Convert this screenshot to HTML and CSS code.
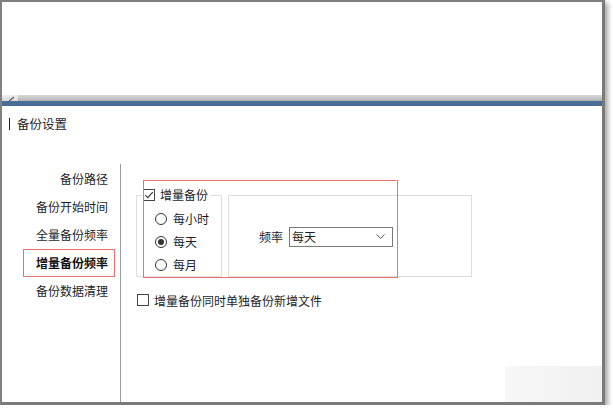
FILE: index.html
```html
<!DOCTYPE html>
<html lang="zh-CN">
<head>
<meta charset="utf-8">
<title>备份设置</title>
<link rel="stylesheet" href="styles.css">
</head>
<body>
<div class="window">
  <div class="top-pane"></div>
  <div class="hscroll">
    <div class="hscroll-start">
      <svg class="grip" width="6" height="5" viewBox="0 0 6 5"><path d="M0 5 L5 1" stroke="#555" stroke-width="1.2" fill="none"/></svg>
    </div>
    <div class="hscroll-track"></div>
  </div>
  <div class="splitter"></div>
  <div class="title"><span class="title-bar"></span><span>备份设置</span></div>
  <div class="body">
    <nav class="nav">
      <div class="nav-item">备份路径</div>
      <div class="nav-item">备份开始时间</div>
      <div class="nav-item">全量备份频率</div>
      <div class="nav-item active">增量备份频率</div>
      <div class="nav-item">备份数据清理</div>
    </nav>
    <main class="content">
      <div class="groups">
        <fieldset class="group group-mode">
          <legend class="legend">
            <svg class="box" width="12" height="12" viewBox="0 0 12 12"><rect x="0.5" y="0.5" width="11" height="11" fill="#fff" stroke="#444"/><path d="M2.3 6.2 L4.8 8.7 L9.8 3.2" stroke="#333" stroke-width="1.1" fill="none"/></svg>
            <span>增量备份</span>
          </legend>
          <div class="radio-row">
            <svg class="radio" width="12" height="12" viewBox="0 0 12 12"><circle cx="6" cy="6" r="5.5" fill="#fff" stroke="#333"/></svg>
            <span>每小时</span>
          </div>
          <div class="radio-row">
            <svg class="radio" width="12" height="12" viewBox="0 0 12 12"><circle cx="6" cy="6" r="5.5" fill="#fff" stroke="#333"/><circle cx="6" cy="6" r="3" fill="#333"/></svg>
            <span>每天</span>
          </div>
          <div class="radio-row">
            <svg class="radio" width="12" height="12" viewBox="0 0 12 12"><circle cx="6" cy="6" r="5.5" fill="#fff" stroke="#333"/></svg>
            <span>每月</span>
          </div>
        </fieldset>
        <div class="group group-freq">
          <span class="freq-label">频率</span>
          <div class="select">
            <span>每天</span>
            <svg class="chevron" width="9" height="5" viewBox="0 0 9 5"><path d="M0.5 0.5 L4.5 4.3 L8.5 0.5" stroke="#555" stroke-width="1" fill="none"/></svg>
          </div>
        </div>
        <div class="highlight"></div>
      </div>
      <div class="check-row">
        <svg class="box" width="12" height="12" viewBox="0 0 12 12"><rect x="0.5" y="0.5" width="11" height="11" fill="#fff" stroke="#444"/></svg>
        <span>增量备份同时单独备份新增文件</span>
      </div>
    </main>
  </div>
  <div class="watermark"></div>
</div>
</body>
</html>
```

FILE: styles.css
```css
* { box-sizing: border-box; }

html, body {
  margin: 0;
  padding: 0;
  background: #ffffff;
}

body {
  font-family: "Noto Sans CJK SC", "Noto Sans", sans-serif;
  font-size: 12px;
  color: #1e1e1e;
}

.window {
  position: relative;
  width: 605px;
  height: 405px;
  display: flex;
  flex-direction: column;
  background: #ffffff;
  border-top: 2px solid #7f7f7f;
  border-left: 2px solid #808080;
  border-right: 3px solid #7a7a7a;
  border-bottom: 3px solid #7a7a7a;
  box-shadow: 3px 3px 5px rgba(0, 0, 0, 0.35);
}

.top-pane {
  height: 93px;
  flex: none;
  background: #ffffff;
}

.hscroll {
  height: 6px;
  flex: none;
  display: flex;
}

.hscroll-start {
  width: 16px;
  background: linear-gradient(#f0f0f0, #d8d8d8);
  display: flex;
  align-items: flex-end;
  padding-left: 7px;
}

.grip { display: block; }

.hscroll-track {
  flex: 1;
  background: linear-gradient(#d6d6d6, #c4c4c4 60%, #b0b0b0);
}

.splitter {
  height: 5px;
  flex: none;
  background: #4a6d98;
}

.title {
  height: 58px;
  flex: none;
  padding-top: 9px;
  padding-left: 7px;
  display: flex;
  align-items: flex-start;
  line-height: 18px;
  font-size: 12.5px;
}

.title-bar {
  width: 1px;
  height: 12px;
  background: #222;
  margin-top: 3px;
  margin-right: 7px;
}

.body {
  flex: 1;
  display: flex;
  min-height: 0;
}

.nav {
  width: 119px;
  flex: none;
  border-right: 1px solid #9c9c9c;
  padding-top: 1px;
  padding-left: 21px;
}

.nav-item {
  width: 92px;
  height: 28px;
  line-height: 26px;
  text-align: right;
  padding-right: 6px;
  border: 1px solid transparent;
}

.nav-item.active {
  font-weight: bold;
  border-color: #ec7070;
  color: #111;
}

.content {
  flex: 1;
  padding-top: 22px;
  padding-left: 15px;
}

.groups {
  position: relative;
  display: flex;
  align-items: flex-end;
  gap: 6px;
}

.group {
  border: 1px solid #dedede;
}

.group-mode {
  width: 86px;
  margin: 0;
  padding: 3px 0 0 0;
  min-width: 0;
}

.legend {
  margin-left: 5px;
  padding: 0 2px 0 1px;
  height: 18px;
  line-height: 18px;
  display: flex;
  align-items: center;
  gap: 5px;
  font-size: 12px;
}

.box { display: block; flex: none; }

.radio-row {
  height: 23px;
  display: flex;
  align-items: center;
  gap: 6px;
  padding-left: 18px;
}

.radio { display: block; flex: none; }

.group-freq {
  width: 244px;
  height: 82px;
  display: flex;
  align-items: center;
  padding-left: 30px;
  padding-top: 1px;
  gap: 6px;
}

.select {
  width: 104px;
  height: 20px;
  border: 1px solid #7a7a7a;
  display: flex;
  align-items: center;
  justify-content: space-between;
  padding-left: 2px;
  padding-right: 7px;
  line-height: 18px;
}

.chevron { display: block; }

.highlight {
  position: absolute;
  left: 7px;
  top: -6px;
  width: 255px;
  height: 98px;
  border: 1px solid rgb(240, 112, 112);
  z-index: 2;
  pointer-events: none;
}

.check-row {
  margin-top: 14px;
  margin-left: 1px;
  height: 18px;
  display: flex;
  align-items: center;
  gap: 5px;
}

.watermark {
  position: absolute;
  right: 0;
  bottom: 0;
  width: 97px;
  height: 36px;
  background: linear-gradient(to right, #f7f7f7, #f4f4f4 45%, #f1f1f1);
}
```
